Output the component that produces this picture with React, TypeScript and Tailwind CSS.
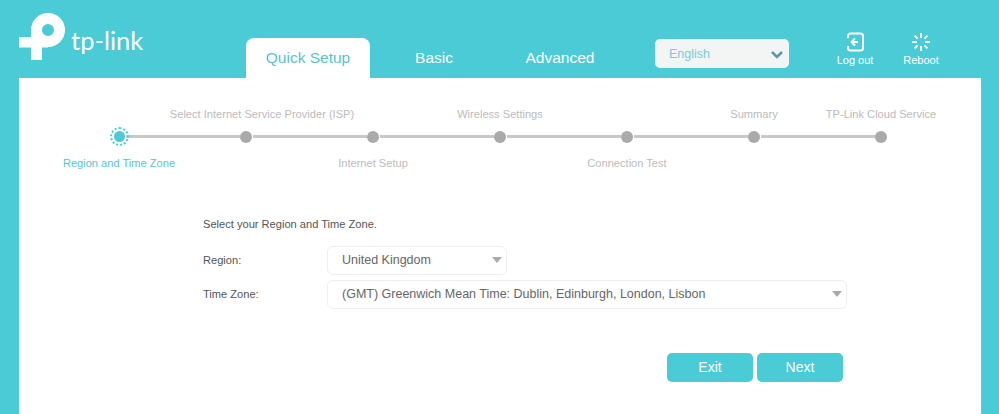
const steps = [
  { label: "Region and Time Zone", below: true, active: true },
  { label: "Select Internet Service Provider (ISP)", offset: true },
  { label: "Internet Setup", below: true },
  { label: "Wireless Settings" },
  { label: "Connection Test", below: true },
  { label: "Summary" },
  { label: "TP-Link Cloud Service" },
];

function Logo() {
  return (
    <svg width="47" height="47" viewBox="0 0 47 47" fill="#fff">
      <circle cx="29" cy="17" r="11.500" fill="none" stroke="#fff" strokeWidth="11" />
      <rect x="0" y="24" width="29" height="10.500" />
      <rect x="12" y="17" width="11" height="30" />
    </svg>
  );
}

function LogoutIcon() {
  return (
    <svg width="20" height="20" viewBox="0 0 20 20" fill="none" stroke="#fff" strokeWidth="2">
      <path d="M3 6V4a2.500 2.500 0 0 1 2.500-2.500h10A2.500 2.500 0 0 1 18 4v12a2.500 2.500 0 0 1-2.500 2.500h-10A2.500 2.500 0 0 1 3 16v-2" />
      <path d="M10 6.500L6.500 10l3.500 3.500M7 10h6" />
    </svg>
  );
}

function RebootIcon() {
  return (
    <svg width="20" height="20" viewBox="0 0 20 20" fill="none" stroke="#fff" strokeWidth="2">
      <path d="M10 1v5M10 14v5M1 10h5M14 10h5M3.600 3.600l3 3M13.400 13.400l3 3M3.600 16.400l3-3M13.400 6.600l3-3" />
    </svg>
  );
}

function FieldSelect({ value, wide }: { value: string; wide?: boolean }) {
  return (
    <div className={`flex h-[29px] items-center justify-between rounded-[6px] border border-[#eeeeee] bg-white pl-[14px] pr-[4px] text-[12.500px] text-[#666666] ${wide ? "w-[520px]" : "w-[180px]"}`}>
      <span>{value}</span>
      <span className="mb-[1px] h-0 w-0 border-x-[5px] border-t-[6px] border-x-transparent border-t-[#aaaaaa]" />
    </div>
  );
}

export default function App() {
  return (
    <div className="flex h-[414px] w-[999px] flex-col overflow-hidden bg-[#4acbd6] font-['Liberation_Sans',Arial,sans-serif]">
      <header className="flex h-[78px] items-start pl-[19px]">
        <div className="mt-[13px] flex w-[227px] items-start">
          <Logo />
          <span className="ml-[5px] mt-[12px] font-['Lato',sans-serif] text-[25.500px] leading-[30px] text-white">tp-link</span>
        </div>
        <nav className="mt-[38px] flex h-[40px] text-[15.500px]">
          <div className="flex w-[124px] items-center justify-center rounded-t-[8px] bg-white text-[#5cc3cd]">Quick Setup</div>
          <div className="flex w-[128px] items-center justify-center text-white">Basic</div>
          <div className="flex w-[124px] items-center justify-center text-white">Advanced</div>
        </nav>
        <div className="ml-[33px] mt-[39px] flex h-[29px] w-[134px] items-center justify-between rounded-[5px] bg-[#f3f5f5] pl-[14px] pr-[4px] text-[12.500px] text-[#7ec9d0]">
          <span className="pt-[2px]">English</span>
          <svg width="16" height="16" viewBox="0 0 16 16" fill="none" stroke="#5f9aa3" strokeWidth="2.500">
            <path d="M3 6l5 5 5-5" />
          </svg>
        </div>
        <div className="ml-[33px] mt-[32px] flex w-[66px] flex-col items-center text-[11px] leading-[13px] text-white">
          <LogoutIcon />
          <span className="mt-[2px]">Log out</span>
        </div>
        <div className="mt-[32px] flex w-[66px] flex-col items-center text-[11px] leading-[13px] text-white">
          <RebootIcon />
          <span className="mt-[2px]">Reboot</span>
        </div>
      </header>

      <main className="mr-[18px] ml-[19px] flex-1 bg-white">
        <div className="ml-[36.500px] mt-[28px] grid w-[889px] grid-cols-7 text-[11.100px] leading-[16px] text-[#bbbbbb]">
          {steps.map((s) => (
            <div key={s.label} className={`flex justify-center whitespace-nowrap ${s.offset ? "pl-[32px]" : ""}`}>
              {!s.below && s.label}
            </div>
          ))}
          <div className="col-span-7 mb-[12px] mt-[8px] ml-[57px] flex h-[13px] items-center">
            {steps.map((s, i) => (
              <div key={s.label} className="flex items-center">
                <span className="relative flex h-[13px] w-[13px] items-center justify-center">
                  {s.active ? (
                    <>
                      <span className="h-[11px] w-[11px] rounded-full bg-[#4acbd6]" />
                      <span className="absolute -inset-[3px] rounded-full border-2 border-dotted border-[#4acbd6]" />
                    </>
                  ) : (
                    <span className="h-[12px] w-[12px] rounded-full bg-[#aaaaaa]" />
                  )}
                </span>
                {i < 6 && <span className="h-[3px] w-[114px] bg-[#c8c8c8]" />}
              </div>
            ))}
          </div>
          {steps.map((s) => (
            <div key={s.label} className={`flex justify-center whitespace-nowrap ${s.active ? "text-[#5cc3cd]" : ""}`}>
              {s.below && s.label}
            </div>
          ))}
        </div>

        <section className="ml-[184px] mt-[45px] text-[11.100px] text-[#555555]">
          <p className="leading-[16px]">Select your Region and Time Zone.</p>
          <div className="mt-[14px] flex items-center">
            <span className="w-[124px]">Region:</span>
            <FieldSelect value="United Kingdom" />
          </div>
          <div className="mt-[5px] flex items-center">
            <span className="w-[124px]">Time Zone:</span>
            <FieldSelect value="(GMT) Greenwich Mean Time: Dublin, Edinburgh, London, Lisbon" wide />
          </div>
          <div className="ml-[464px] mt-[44px] flex gap-[4px] text-[14px] text-white">
            <button className="h-[29px] w-[86px] rounded-[5px] bg-[#4acbd6]">Exit</button>
            <button className="h-[29px] w-[86px] rounded-[5px] bg-[#4acbd6]">Next</button>
          </div>
        </section>
      </main>
    </div>
  );
}
